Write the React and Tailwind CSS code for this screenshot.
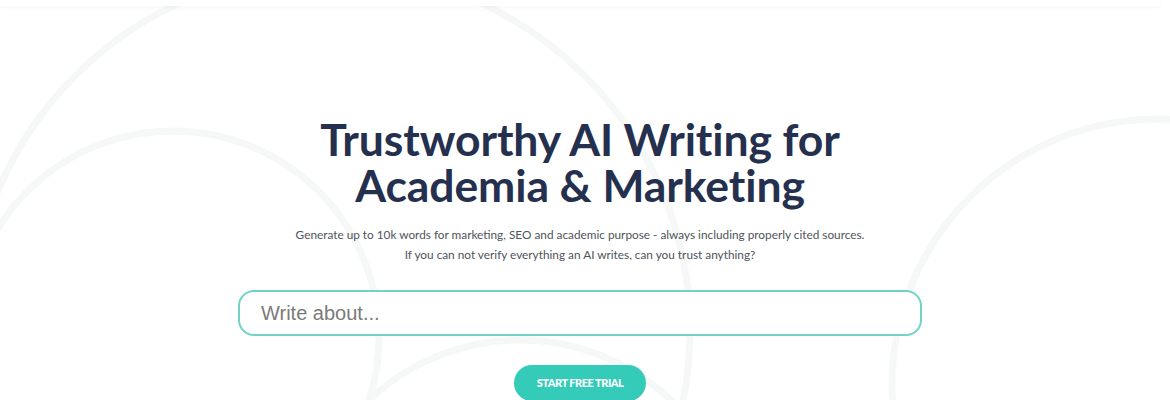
import { useState } from 'react'

const LATO = { fontFamily: 'Lato, "Noto Sans", sans-serif' }

function Backdrop() {
  // faint decorative rings behind the hero
  return (
    <svg
      className="absolute inset-0 w-full h-full pointer-events-none"
      viewBox="0 0 1170 400"
      preserveAspectRatio="none"
      fill="none"
    >
      <g stroke="#f6f8f8" strokeWidth="7">
        <circle cx="173" cy="337" r="206" />
        <circle cx="1158" cy="385" r="266" />
        <circle cx="330" cy="330" r="360" />
        <circle cx="520" cy="560" r="220" />
      </g>
    </svg>
  )
}

export default function App() {
  const [topic, setTopic] = useState('')

  return (
    <div className="relative w-full h-[400px] overflow-hidden bg-white pr-[10px]" style={LATO}>
      <Backdrop />

      {/* top bar edge */}
      <div className="relative h-[6px] bg-white shadow-[0_2px_4px_rgba(0,0,0,0.035)]" />

      <div className="relative flex flex-col items-center pt-[110px]">
        <h1 className="text-[44.5px] leading-[46px] font-bold text-[#25304f] text-center tracking-[-0.1px]">
          Trustworthy AI Writing for
          <br />
          Academia &amp; Marketing
        </h1>

        <p className="mt-[17px] text-[11.8px] leading-[20px] text-[#4f535a] text-center">
          Generate up to 10k words for marketing, SEO and academic purpose - always including properly cited sources.
          <br />
          If you can not verify everything an AI writes, can you trust anything?
        </p>

        <input
          value={topic}
          onChange={e => setTopic(e.target.value)}
          placeholder="Write about..."
          className="mt-[25px] w-[684px] h-[46px] rounded-[16px] border-2 border-[#6fd4c6] bg-white px-[21px] text-[20px] text-[#444] placeholder:text-[#7a7a7a] outline-none"
          style={{ fontFamily: '"Liberation Sans", Arial, sans-serif' }}
        />

        <button className="mt-[29px] w-[132px] h-[36px] rounded-full bg-[#34cbb8] text-white text-[11px] font-black tracking-[-0.5px] uppercase">
          Start free trial
        </button>
      </div>
    </div>
  )
}
